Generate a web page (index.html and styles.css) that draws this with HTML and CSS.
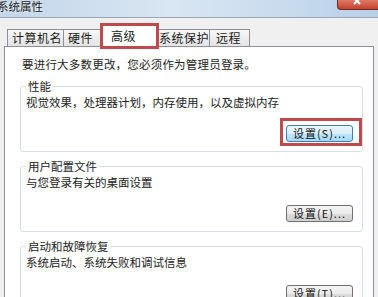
FILE: index.html
```html
<!DOCTYPE html>
<html lang="zh-CN">
<head>
<meta charset="utf-8">
<title>系统属性</title>
<link rel="stylesheet" href="styles.css">
</head>
<body>
<div class="window">
  <div class="titlebar">
    <span class="title">系统属性</span>
    <span class="close"><svg width="40" height="9" viewBox="0 0 40 9"><path d="M16 -2 L22 4 M22 -2 L16 4" stroke="#fff" stroke-width="2" fill="none"/></svg></span>
  </div>
  <div class="client">
    <div class="tabs">
      <div class="tab t1">计算机名</div>
      <div class="tab t2">硬件</div>
      <div class="tab t3 active">高级</div>
      <div class="tab t4">系统保护</div>
      <div class="tab t5">远程</div>
    </div>
    <div class="panel">
      <p class="note">要进行大多数更改，您必须作为管理员登录。</p>
      <fieldset class="group">
        <legend>性能</legend>
        <p class="desc">视觉效果，处理器计划，内存使用，以及虚拟内存</p>
        <div class="actions"><button class="btn focused marked">设置(S)...</button></div>
      </fieldset>
      <fieldset class="group">
        <legend>用户配置文件</legend>
        <p class="desc">与您登录有关的桌面设置</p>
        <div class="actions"><button class="btn">设置(E)...</button></div>
      </fieldset>
      <fieldset class="group">
        <legend>启动和故障恢复</legend>
        <p class="desc">系统启动、系统失败和调试信息</p>
        <div class="actions"><button class="btn">设置(T)...</button></div>
      </fieldset>
    </div>
  </div>
</div>
</body>
</html>
```

FILE: styles.css
```css
html, body {
  margin: 0;
  padding: 0;
}
body {
  width: 378px;
  height: 297px;
  overflow: hidden;
  font-family: "Noto Sans CJK SC", "Microsoft YaHei", sans-serif;
  font-size: 11.5px;
  color: #222222;
  background: #f0f0f0;
}
.window {
  display: flex;
  flex-direction: column;
  height: 297px;
  overflow: hidden;
}
.titlebar {
  flex: none;
  height: 17px;
  display: flex;
  justify-content: space-between;
  align-items: flex-start;
  background: linear-gradient(to right, #c3d6ea 0%, #d9e6f3 45%, #c9dbee 75%, #b7cfe8 100%);
  border-bottom: 1px solid #9aa6b3;
  overflow: hidden;
}
.title {
  margin-left: -3px;
  font-size: 11.5px;
  line-height: 12px;
  color: #202020;
  text-shadow: 0 0 3px #ffffff;
}
.close {
  width: 40px;
  height: 9px;
  background: linear-gradient(#e07a66, #c6412d);
  border-left: 1px solid #6e2a20;
  border-bottom: 1px solid #6e2a20;
  border-bottom-left-radius: 4px;
  display: block;
}
.close svg { display: block; }
.client {
  flex: 1;
  min-height: 0;
  display: flex;
  flex-direction: column;
  padding-top: 6px;
  background: #f0f0f0;
}
.tabs {
  flex: none;
  display: flex;
  align-items: flex-end;
  padding-left: 7px;
  height: 22px;
  position: relative;
  z-index: 2;
}
.tab {
  box-sizing: border-box;
  height: 17px;
  line-height: 16px;
  border: 1px solid #8d9099;
  border-bottom: none;
  margin-right: -1px;
  background: linear-gradient(#f7f7f7, #e4e4e4);
  font-size: 12px;
  letter-spacing: 0.5px;
  color: #1a1a1a;
}
.t1 { width: 57px; padding-left: 4px; }
.t2 { width: 42px; padding-left: 4px; }
.t4 { width: 54px; padding-left: 2px; }
.t5 { width: 41px; padding-left: 6px; }
.tab.active {
  width: 55px;
  height: 22px;
  line-height: 20px;
  padding-left: 8px;
  margin: 0 -1px -1px -2px;
  background: #ffffff;
  position: relative;
  z-index: 3;
  outline: 3px solid #bd4a4d;
  outline-offset: -1px;
}
.panel {
  flex: none;
  height: 300px;
  margin: 0 4px;
  border: 1px solid #8d9099;
  border-bottom: none;
  background: #ffffff;
  display: flex;
  flex-direction: column;
}
.note {
  margin: 9px 0 0 17px;
  line-height: 16px;
  letter-spacing: 0.2px;
}
.group {
  flex: none;
  margin: 7px 10px 0 15px;
  padding: 0 9px 9px 5px;
  border: 1px solid #d5dfe5;
  border-radius: 3px;
  min-width: 0;
}
.group legend {
  padding: 0 2px;
  margin-left: 0;
  line-height: 14px;
}
.desc {
  margin: 1px 0 0 0;
  line-height: 16px;
}
.actions {
  display: flex;
  justify-content: flex-end;
  margin-top: 15px;
}
.btn {
  width: 67px;
  height: 17px;
  padding: 0;
  font-family: "Noto Sans CJK SC", sans-serif;
  font-size: 11px;
  line-height: 15px;
  color: #151515;
  border: 1px solid #707070;
  border-radius: 3px;
  background: linear-gradient(#f3f3f3 0%, #ebebeb 50%, #dddddd 51%, #cfcfcf 100%);
  letter-spacing: 1px;
}
.btn.focused {
  border-color: #3c7fb1;
  background: linear-gradient(#eaf6fd 0%, #d9f0fc 50%, #bee6fd 51%, #a7d9f5 100%);
}
.btn.marked {
  position: relative;
}
.btn.marked::after {
  content: "";
  position: absolute;
  top: -8px;
  left: -7px;
  right: -10px;
  bottom: -5px;
  border: 3px solid #bd4a4d;
}
```
